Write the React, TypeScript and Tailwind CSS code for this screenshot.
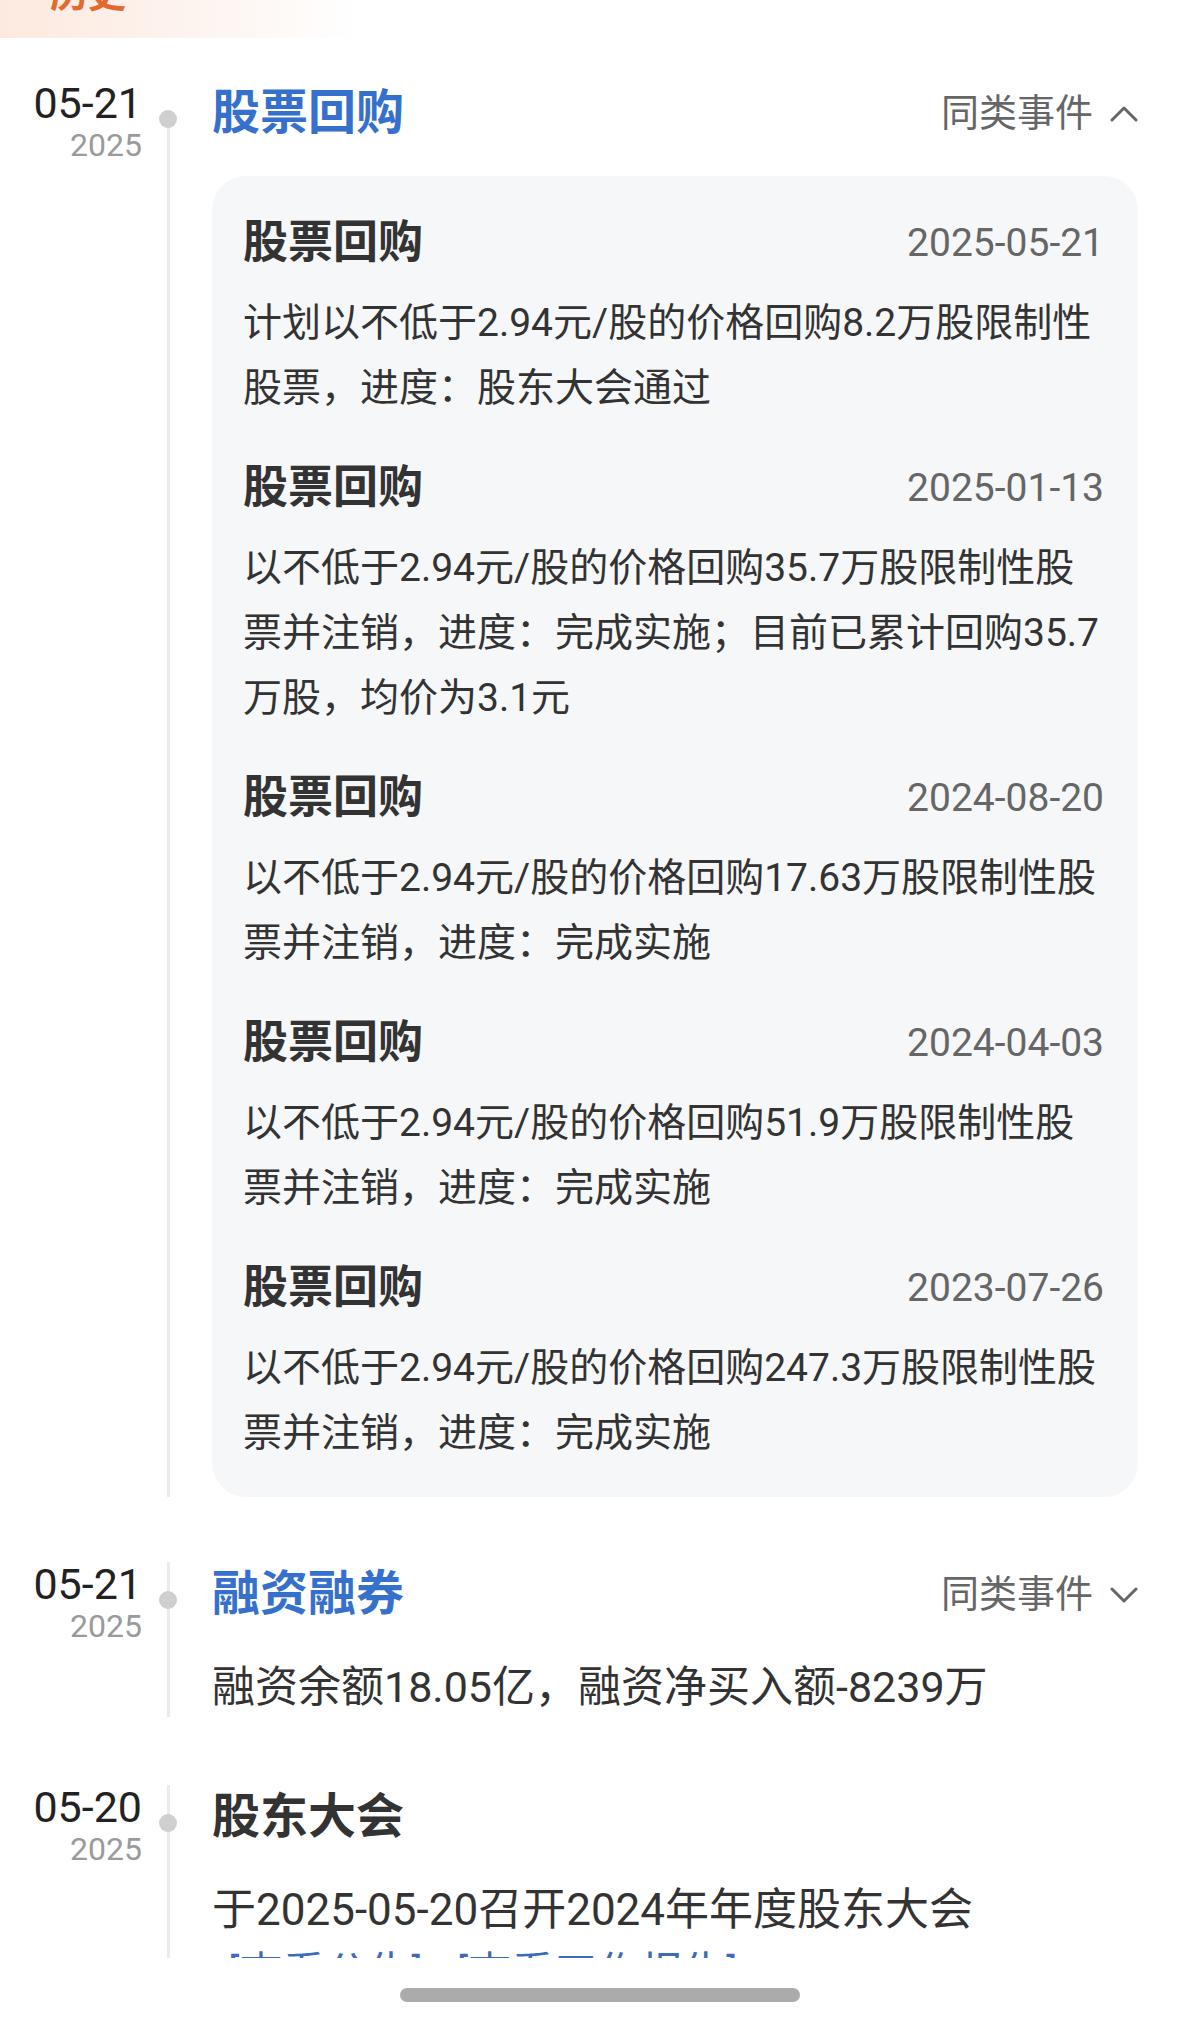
type CardItem = {
  date: string;
  lines: string[];
};

const buybacks: CardItem[] = [
  {
    date: "2025-05-21",
    lines: ["计划以不低于2.94元/股的价格回购8.2万股限制性", "股票，进度：股东大会通过"],
  },
  {
    date: "2025-01-13",
    lines: [
      "以不低于2.94元/股的价格回购35.7万股限制性股",
      "票并注销，进度：完成实施；目前已累计回购35.7",
      "万股，均价为3.1元",
    ],
  },
  {
    date: "2024-08-20",
    lines: ["以不低于2.94元/股的价格回购17.63万股限制性股", "票并注销，进度：完成实施"],
  },
  {
    date: "2024-04-03",
    lines: ["以不低于2.94元/股的价格回购51.9万股限制性股", "票并注销，进度：完成实施"],
  },
  {
    date: "2023-07-26",
    lines: ["以不低于2.94元/股的价格回购247.3万股限制性股", "票并注销，进度：完成实施"],
  },
];

function Chevron({ up }: { up?: boolean }) {
  return (
    <svg width="28" height="17" viewBox="0 0 28 17" fill="none" className="shrink-0">
      <polyline
        points={up ? "2,15 14,3 26,15" : "2,3 14,15 26,3"}
        stroke="#666"
        strokeWidth="3"
        strokeLinecap="round"
        strokeLinejoin="round"
      />
    </svg>
  );
}

function SameKind({ open }: { open?: boolean }) {
  return (
    <div className="mt-[6px] flex items-center gap-[17px] text-[38px] leading-[44px] text-[#666]">
      <span>同类事件</span>
      <Chevron up={open} />
    </div>
  );
}

type RowProps = {
  day: string;
  year: string;
  first?: boolean;
  className?: string;
  children: React.ReactNode;
};

function TimelineRow({ day, year, first, className, children }: RowProps) {
  return (
    <div className={`flex ${className ?? ""}`}>
      <div className="w-[142px] shrink-0 text-right">
        <div className="text-[43px] leading-[44px] text-[#222]">{day}</div>
        <div className="text-[32px] leading-[40px] text-[#9a9a9a]">{year}</div>
      </div>
      <div className="relative w-[70px] shrink-0">
        <div
          className={`absolute bottom-0 left-[24.5px] w-[3px] bg-[#ebebeb] ${first ? "top-[38px]" : "top-0"}`}
        />
        <div className="absolute left-[17px] top-[29px] h-[18px] w-[18px] rounded-full bg-[#cfcfcf]" />
      </div>
      <div className="min-w-0 flex-1 pr-[62px]">{children}</div>
    </div>
  );
}

export default function App() {
  return (
    <div className="min-h-[2031px] bg-white font-['Roboto','Noto_Sans_CJK_SC',sans-serif]">
      <div className="h-[1958px] overflow-hidden">
        <div className="h-[38px] w-[360px] overflow-hidden bg-gradient-to-r from-[#fde9df] via-[#fdf3ee] to-white">
          <div className="-mt-[28px] pl-[50px] text-[38px] font-bold leading-[44px] text-[#e2692f]">历史</div>
        </div>

        <div className="pt-[43px]">
          <TimelineRow day="05-21" year="2025" first className="pb-[65px]">
            <div className="flex items-start justify-between pt-[4px]">
              <span className="text-[48px] font-bold leading-[56px] text-[#3571cc]">股票回购</span>
              <SameKind open />
            </div>
            <div className="mt-[35px] rounded-[34px] bg-[#f6f7f9] pb-[31px] pl-[31px] pr-[34px] pt-[37px]">
              {buybacks.map((item, i) => (
                <div key={item.date} className={i > 0 ? "mt-[37px]" : ""}>
                  <div className="flex h-[60px] items-center justify-between">
                    <span className="text-[45px] font-bold leading-[60px] text-[#333]">股票回购</span>
                    <span className="text-[39px] leading-[60px] text-[#666]">{item.date}</span>
                  </div>
                  <div className="mt-[18px] text-[39px] leading-[65px] text-[#333]">
                    {item.lines.map((line) => (
                      <div key={line} className="whitespace-nowrap">
                        {line}
                      </div>
                    ))}
                  </div>
                </div>
              ))}
            </div>
          </TimelineRow>

          <TimelineRow day="05-21" year="2025" className="pb-[68px]">
            <div className="flex items-start justify-between pt-[4px]">
              <span className="text-[48px] font-bold leading-[56px] text-[#3571cc]">融资融券</span>
              <SameKind />
            </div>
            <div className="mt-[35px] whitespace-nowrap text-[43px] leading-[60px] text-[#333]">
              融资余额18.05亿，融资净买入额-8239万
            </div>
          </TimelineRow>

          <TimelineRow day="05-20" year="2025">
            <div className="pt-[4px]">
              <span className="text-[48px] font-bold leading-[56px] text-[#333]">股东大会</span>
            </div>
            <div className="mt-[35px] whitespace-nowrap text-[44px] leading-[60px] text-[#333]">
              于2025-05-20召开2024年年度股东大会
            </div>
            <div className="mt-[3px] flex gap-[34px] pl-[16px] text-[43px] leading-[60px] text-[#3a6cb8]">
              <span>[查看公告]</span>
              <span>[查看工作报告]</span>
            </div>
          </TimelineRow>
        </div>
      </div>

      <div className="flex justify-center pt-[30px]">
        <div className="h-[14px] w-[400px] rounded-full bg-[#ababab]" />
      </div>
    </div>
  );
}
